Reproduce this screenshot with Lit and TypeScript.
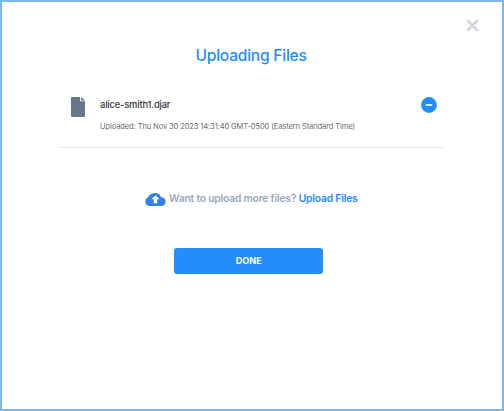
import { LitElement, html, css } from "lit";
import { customElement } from "lit/decorators.js";

@customElement("app-root")
export class AppRoot extends LitElement {
  static styles = css`
    :host {
      display: block;
      height: 411px;
      font-family: Inter, "Liberation Sans", sans-serif;
    }
    * { box-sizing: border-box; }
    .dialog {
      position: relative;
      height: 411px;
      border: 2px solid #7db8e8;
      background: #fff;
      padding: 42px 58.5px 0 56.5px;
      display: flex;
      flex-direction: column;
      overflow: hidden;
    }
    button { font-family: inherit; border: 0; padding: 0; background: none; }
    svg { display: block; flex: none; }
    .close { position: absolute; left: 463.5px; top: 16.5px; }
    .title {
      margin: 0 0 0 137px;
      font-size: 15.6px;
      line-height: 24px;
      font-weight: 500;
      letter-spacing: -0.25px;
      color: #238efa;
      white-space: nowrap;
    }
    .file {
      display: flex;
      align-items: flex-start;
      height: 80px;
      padding: 29px 6.5px 0 12.5px;
      border-bottom: 1px solid #e9e9ec;
    }
    .info { margin-left: 15px; flex: 1; white-space: nowrap; }
    .name {
      font-size: 9.4px;
      line-height: 15px;
      font-weight: 500;
      letter-spacing: -0.18px;
      color: #35353b;
    }
    .date {
      margin-top: 8px;
      font-size: 7.6px;
      line-height: 14px;
      letter-spacing: -0.145px;
      color: #6c6c70;
    }
    .more {
      display: flex;
      align-items: center;
      height: 20px;
      margin: 41px 0 0 86.5px;
      font-size: 10.3px;
      line-height: 14px;
      font-weight: 600;
      white-space: nowrap;
    }
    .question, .link { padding-bottom: 2px; letter-spacing: -0.2px; }
    .question { margin-left: 3px; color: #98a8bd; }
    .link { margin-left: 2.5px; color: #238efa; }
    .done {
      width: 149px;
      height: 26px;
      margin: 39px 0 0 115.7px;
      border-radius: 3px;
      background: #238efa;
      color: #fff;
      font-size: 9.1px;
      font-weight: 700;
      line-height: 26px;
    }
  `;

  render() {
    return html`
      <section class="dialog">
        <button class="close" aria-label="Close">
          <svg width="13" height="13" viewBox="0 0 13 13">
            <path d="M2 2 11 11M11 2 2 11" stroke="#cfd4dd" stroke-width="2.8" stroke-linecap="round" />
          </svg>
        </button>
        <h1 class="title">Uploading Files</h1>
        <div class="file">
          <svg width="14" height="20" viewBox="0 0 14 20">
            <path d="M.8 0H9v4.2h5v14.9a.8.8 0 0 1-.8.8H.8a.8.8 0 0 1-.8-.8V.8A.8.8 0 0 1 .8 0Z" fill="#67758d" />
            <path d="M10 0 14 3.5H10Z" fill="#67758d" />
          </svg>
          <div class="info">
            <div class="name">alice-smith1.djar</div>
            <div class="date">Uploaded: Thu Nov 30 2023 14:31:40 GMT-0500 (Eastern Standard Time)</div>
          </div>
          <button aria-label="Remove">
            <svg width="16" height="16" viewBox="0 0 16 16">
              <circle cx="8" cy="8" r="7.9" fill="#238efa" />
              <rect x="4.8" y="7" width="6.5" height="2" rx=".4" fill="#d8eafd" />
            </svg>
          </button>
        </div>
        <div class="more">
          <svg width="21" height="14" viewBox="0 0 21 14">
            <path d="M4.8 14A4.5 4.5 0 0 1 3.2 5.3 5 5 0 0 1 7 1.8 6.4 6.4 0 0 1 16.2 5.2 4.4 4.4 0 0 1 16.3 14Z" fill="#3382eb" />
            <path d="m10.5 3.2 4 4.1H12.2v3.9H8.8V7.3H6.5Z" fill="#fff" />
          </svg>
          <span class="question">Want to upload more files?</span>
          <span class="link">Upload Files</span>
        </div>
        <button class="done">DONE</button>
      </section>
    `;
  }
}
